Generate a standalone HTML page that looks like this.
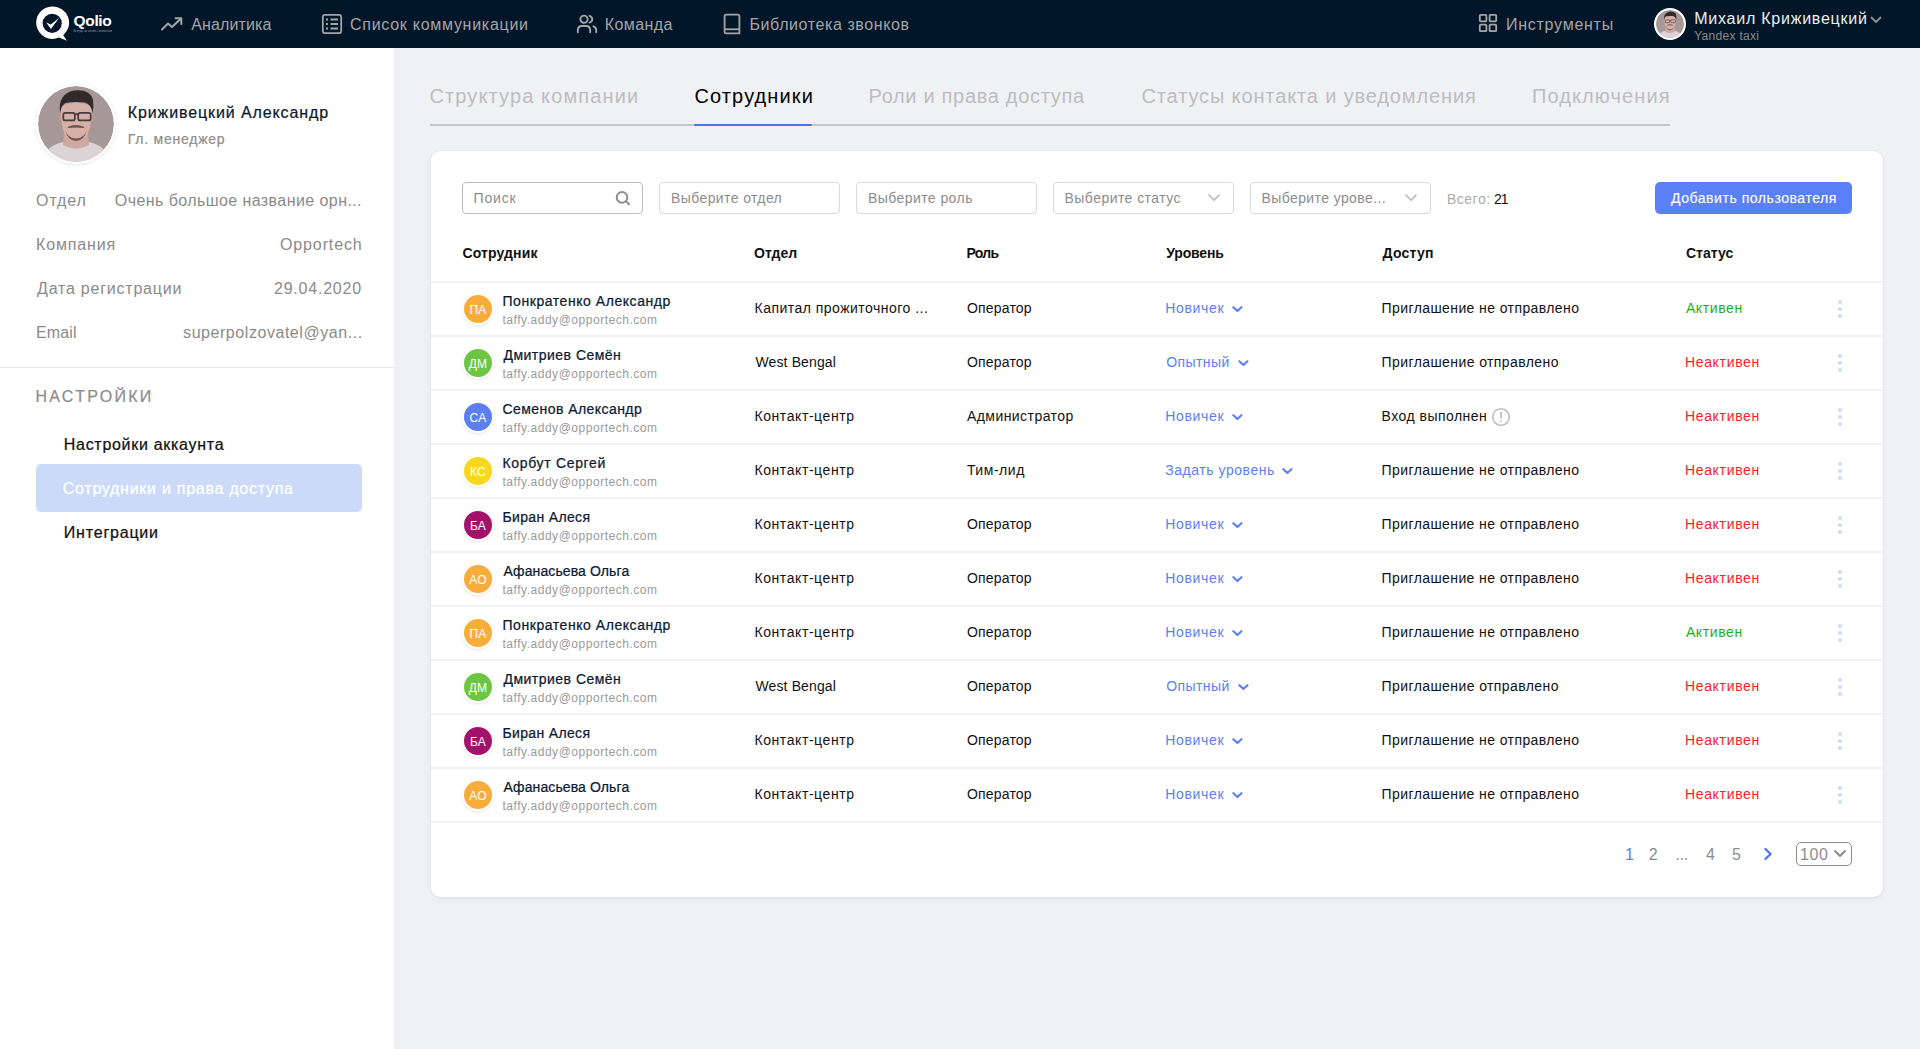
<!DOCTYPE html>
<html lang="ru"><head><meta charset="utf-8"><title>Сотрудники</title>
<style>
*{margin:0;padding:0;box-sizing:border-box}
html,body{width:1920px;height:1049px;overflow:hidden;background:#F0F1F5;font-family:"Liberation Sans",sans-serif}
.t{position:absolute;white-space:nowrap}
.hdr{position:absolute;left:0;top:0;width:1920px;height:48px;background:#011629}
.side{position:absolute;left:0;top:48px;width:394px;height:1001px;background:#FFFFFF}
.sdiv{position:absolute;left:0;top:367px;width:394px;height:1px;background:#E6E6E6}
.hl{position:absolute;left:36px;top:464px;width:326px;height:48px;border-radius:5px;background:#CCDAF9}
.tabline{position:absolute;left:430px;top:124px;width:1240px;height:2px;background:#C6C6C6}
.tabact{position:absolute;left:694px;top:124px;width:118px;height:2px;background:#4C73F0;border-radius:1px}
.card{position:absolute;left:431px;top:151px;width:1452px;height:746px;background:#FFFFFF;border-radius:9px;box-shadow:0 0 1px rgba(0,0,0,0.16),0 2px 5px rgba(0,0,0,0.05)}
.inp{position:absolute;top:182px;height:32px;width:181px;border:1px solid #D9D9D9;border-radius:4px;background:#fff}
.btn{position:absolute;left:1655px;top:182px;width:197px;height:32px;border-radius:5px;background:#5B80F5}
.sep{position:absolute;left:431px;width:1452px;height:2px;background:#F2F2F2}
.av{position:absolute;left:462px;width:32px;height:32px;border-radius:50%;border:2px solid #fff;box-shadow:0 1px 3px rgba(0,0,0,0.10)}
.av span{position:absolute;left:0;top:1px;width:28px;height:28px;line-height:28px;text-align:center;color:#fff;font-size:12px;letter-spacing:0.3px}
.dots{position:absolute;left:1836px;fill:#CCDAFA}
.chev{position:absolute}
.ico{position:absolute}
.psel{position:absolute;left:1796px;top:842px;width:56px;height:24px;border:1px solid #8C8C8C;border-radius:5px}
.pavatar{position:absolute;left:36px;top:84px;width:80px;height:80px;border-radius:50%;background:#fff;box-shadow:0 1px 4px rgba(0,0,0,0.10);padding:2px}
.pavatar svg{display:block;border-radius:50%}
.uav{position:absolute;left:1654px;top:8px;width:32px;height:32px;border-radius:50%;background:#fff;padding:2px}
.uav svg{display:block;border-radius:50%}
</style></head><body>
<div class="hdr"></div>
<!-- logo -->
<svg class="ico" style="left:34px;top:4px" width="82" height="40" viewBox="0 0 82 40">
  <path d="M18.3 2.5 A16.2 16.2 0 1 0 25 33.5 L33 36.8 L29.2 31.2 A16.2 16.2 0 0 0 18.3 2.5Z" fill="#fff"/>
  <circle cx="18.2" cy="19.3" r="9.6" fill="#011629"/>
  <path d="M12.2 18.6 L16.9 25 L25 14 L16.8 20.6 Z" fill="#fff"/>
  <text x="39.6" y="21.9" font-family="Liberation Sans" font-weight="700" font-size="15.5" fill="#fff" letter-spacing="-0.35">Qolio</text>
  <text x="39.6" y="28.4" font-family="Liberation Sans" font-size="3.4" fill="#fff" opacity="0.5" textLength="38.5" lengthAdjust="spacingAndGlyphs">Всегда на связи с клиентом</text>
</svg>
<!-- nav icons -->
<svg class="ico" style="left:160px;top:16px" width="24" height="16" viewBox="0 0 24 16">
  <path d="M2 13.5 L8 7.5 L12 11 L21 2.5" fill="none" stroke="#A5A5A5" stroke-width="2" stroke-linecap="round" stroke-linejoin="round"/>
  <path d="M15.5 2.3 H21.3 V8" fill="none" stroke="#A5A5A5" stroke-width="2" stroke-linecap="round" stroke-linejoin="round"/>
</svg>
<svg class="ico" style="left:321px;top:13px" width="22" height="22" viewBox="0 0 22 22">
  <rect x="1.8" y="1.8" width="18.4" height="18.4" rx="2.2" fill="none" stroke="#A5A5A5" stroke-width="1.8"/>
  <path d="M5 6.5 H7 M9.5 6.5 H17 M5 11 H7 M9.5 11 H17 M5 15.5 H7 M9.5 15.5 H17" stroke="#A5A5A5" stroke-width="1.8"/>
</svg>
<svg class="ico" style="left:576px;top:14px" width="22" height="20" viewBox="0 0 22 20">
  <circle cx="8" cy="5.2" r="3.6" fill="none" stroke="#A5A5A5" stroke-width="1.9"/>
  <path d="M1.8 18.2 V16.5 Q1.8 12 6 12 H10 Q14.2 12 14.2 16.5 V18.2" fill="none" stroke="#A5A5A5" stroke-width="1.9" stroke-linecap="round"/>
  <path d="M13.6 1.8 Q16.3 2.8 16.3 5.2 Q16.3 7.6 13.6 8.6" fill="none" stroke="#A5A5A5" stroke-width="1.9" stroke-linecap="round"/>
  <path d="M17.5 12.3 Q20.2 13.2 20.2 16.5 V18.2" fill="none" stroke="#A5A5A5" stroke-width="1.9" stroke-linecap="round"/>
</svg>
<svg class="ico" style="left:723px;top:13px" width="18" height="22" viewBox="0 0 18 22">
  <path d="M3.2 1.6 H14.8 Q16.4 1.6 16.4 3.2 V20.4 H3.2 Q1.6 20.4 1.6 18.8 V3.2 Q1.6 1.6 3.2 1.6Z" fill="none" stroke="#A5A5A5" stroke-width="1.8"/>
  <path d="M1.8 16.3 H16.2" stroke="#A5A5A5" stroke-width="1.8"/>
</svg>
<svg class="ico" style="left:1478px;top:13px" width="20" height="20" viewBox="0 0 20 20">
  <rect x="1.8" y="1.8" width="6.6" height="6.6" rx="0.8" fill="none" stroke="#A5A5A5" stroke-width="1.8"/>
  <rect x="11.6" y="1.8" width="6.6" height="6.6" rx="0.8" fill="none" stroke="#A5A5A5" stroke-width="1.8"/>
  <rect x="1.8" y="11.6" width="6.6" height="6.6" rx="0.8" fill="none" stroke="#A5A5A5" stroke-width="1.8"/>
  <rect x="11.6" y="11.6" width="6.6" height="6.6" rx="0.8" fill="none" stroke="#A5A5A5" stroke-width="1.8"/>
</svg>
<div class="uav"><svg width="28" height="28" viewBox="0 0 76 76">
<defs><clipPath id="cb"><circle cx="38" cy="38" r="38"/></clipPath><filter id="fb" x="-10%" y="-10%" width="120%" height="120%"><feGaussianBlur stdDeviation="0.7"/></filter></defs>
<g clip-path="url(#cb)">
<rect width="76" height="76" fill="#A69799"/>
<g filter="url(#fb)">
<path d="M4 78 Q6 60 25 56 L51 56 Q70 60 72 78 Z" fill="#DBD3D5"/>
<path d="M26 46 L50 46 L51 59 Q38 66 25 59 Z" fill="#CDA8A0"/>
<ellipse cx="22.8" cy="31" rx="2.6" ry="4.6" fill="#C09890"/>
<ellipse cx="53.6" cy="31" rx="2.6" ry="4.6" fill="#C09890"/>
<path d="M23 20 Q22.5 46 30 52 Q38 57.5 46 52 Q54 46 54 20 Q38 13 23 20 Z" fill="#D4B0A6"/>
<path d="M22 27 Q19.5 8 36 4.5 Q52.5 3 55 14 Q56 21 54.5 27 Q53.5 18.5 47 16.5 Q36 15.5 27.5 17 Q23.5 19 22 27 Z" fill="#332A29"/>
<rect x="25.3" y="26.8" width="11.5" height="7.6" rx="2" fill="none" stroke="#463A3A" stroke-width="1.7"/>
<rect x="40.2" y="26.8" width="12.5" height="7.6" rx="2" fill="none" stroke="#463A3A" stroke-width="1.7"/>
<path d="M36.5 28.2 H40.5" stroke="#463A3A" stroke-width="1.7"/>
<path d="M30 41.5 Q38 37.5 46 41.5 Q38 40.5 30 41.5Z" fill="#6E5852" stroke="#6E5852" stroke-width="1.2"/>
<path d="M27 44 Q30 55 38 55 Q46 55 49 44 Q46 52.5 38 52.5 Q30 52.5 27 44 Z" fill="#6A5550"/>
</g></g></svg></div>
<svg class="ico" style="left:1870px;top:16px" width="12" height="8" viewBox="0 0 12 8">
  <path d="M1.5 1.5 L6 6 L10.5 1.5" fill="none" stroke="#8F8F8F" stroke-width="1.8" stroke-linecap="round" stroke-linejoin="round"/>
</svg>

<div class="side"></div>
<div class="pavatar"><svg width="76" height="76" viewBox="0 0 76 76">
<defs><clipPath id="ca"><circle cx="38" cy="38" r="38"/></clipPath><filter id="fa" x="-10%" y="-10%" width="120%" height="120%"><feGaussianBlur stdDeviation="0.7"/></filter></defs>
<g clip-path="url(#ca)">
<rect width="76" height="76" fill="#A69799"/>
<g filter="url(#fa)">
<path d="M4 78 Q6 60 25 56 L51 56 Q70 60 72 78 Z" fill="#DBD3D5"/>
<path d="M26 46 L50 46 L51 59 Q38 66 25 59 Z" fill="#CDA8A0"/>
<ellipse cx="22.8" cy="31" rx="2.6" ry="4.6" fill="#C09890"/>
<ellipse cx="53.6" cy="31" rx="2.6" ry="4.6" fill="#C09890"/>
<path d="M23 20 Q22.5 46 30 52 Q38 57.5 46 52 Q54 46 54 20 Q38 13 23 20 Z" fill="#D4B0A6"/>
<path d="M22 27 Q19.5 8 36 4.5 Q52.5 3 55 14 Q56 21 54.5 27 Q53.5 18.5 47 16.5 Q36 15.5 27.5 17 Q23.5 19 22 27 Z" fill="#332A29"/>
<rect x="25.3" y="26.8" width="11.5" height="7.6" rx="2" fill="none" stroke="#463A3A" stroke-width="1.7"/>
<rect x="40.2" y="26.8" width="12.5" height="7.6" rx="2" fill="none" stroke="#463A3A" stroke-width="1.7"/>
<path d="M36.5 28.2 H40.5" stroke="#463A3A" stroke-width="1.7"/>
<path d="M30 41.5 Q38 37.5 46 41.5 Q38 40.5 30 41.5Z" fill="#6E5852" stroke="#6E5852" stroke-width="1.2"/>
<path d="M27 44 Q30 55 38 55 Q46 55 49 44 Q46 52.5 38 52.5 Q30 52.5 27 44 Z" fill="#6A5550"/>
</g></g></svg></div>
<div class="sdiv"></div>
<div class="hl"></div>

<div class="tabline"></div>
<div class="tabact"></div>

<div class="card"></div>
<div class="inp" style="left:462px;border-color:#BDBDBD"></div>
<div class="inp" style="left:659px"></div>
<div class="inp" style="left:856px"></div>
<div class="inp" style="left:1053px"></div>
<div class="inp" style="left:1250px"></div>
<svg class="ico" style="left:614px;top:189px" width="18" height="18" viewBox="0 0 18 18">
  <circle cx="8" cy="8.4" r="5.3" fill="none" stroke="#8C8C8C" stroke-width="2"/>
  <path d="M12.1 12.4 L15 15.3" stroke="#8C8C8C" stroke-width="2" stroke-linecap="round"/>
</svg>
<svg class="ico" style="left:1207px;top:193px" width="14" height="10" viewBox="0 0 14 10">
  <path d="M2 2.2 L7 7.2 L12 2.2" fill="none" stroke="#BFBFBF" stroke-width="1.8" stroke-linecap="round" stroke-linejoin="round"/>
</svg>
<svg class="ico" style="left:1404px;top:193px" width="14" height="10" viewBox="0 0 14 10">
  <path d="M2 2.2 L7 7.2 L12 2.2" fill="none" stroke="#BFBFBF" stroke-width="1.8" stroke-linecap="round" stroke-linejoin="round"/>
</svg>
<div class="btn"></div>

<div class="sep" style="top:281px"></div>
<div class="sep" style="top:335px"></div>
<div class="sep" style="top:389px"></div>
<div class="sep" style="top:443px"></div>
<div class="sep" style="top:497px"></div>
<div class="sep" style="top:551px"></div>
<div class="sep" style="top:605px"></div>
<div class="sep" style="top:659px"></div>
<div class="sep" style="top:713px"></div>
<div class="sep" style="top:767px"></div>
<div class="sep" style="top:821px"></div>

<div class="av" style="top:293px;background:#F8AC3B"><span>ПА</span></div>
<div class="av" style="top:347px;background:#6CC644"><span>ДМ</span></div>
<div class="av" style="top:401px;background:#5B7FEF"><span>СА</span></div>
<div class="av" style="top:455px;background:#F8D81C"><span>КС</span></div>
<div class="av" style="top:509px;background:#A3126A"><span>БА</span></div>
<div class="av" style="top:563px;background:#F8AC3B"><span>АО</span></div>
<div class="av" style="top:617px;background:#F8AC3B"><span>ПА</span></div>
<div class="av" style="top:671px;background:#6CC644"><span>ДМ</span></div>
<div class="av" style="top:725px;background:#A3126A"><span>БА</span></div>
<div class="av" style="top:779px;background:#F8AC3B"><span>АО</span></div>

<svg class="dots" style="top:299px" width="8" height="20" viewBox="0 0 8 20"><circle cx="4" cy="3" r="2"/><circle cx="4" cy="10" r="2"/><circle cx="4" cy="17" r="2"/></svg>
<svg class="dots" style="top:353px" width="8" height="20" viewBox="0 0 8 20"><circle cx="4" cy="3" r="2"/><circle cx="4" cy="10" r="2"/><circle cx="4" cy="17" r="2"/></svg>
<svg class="dots" style="top:407px" width="8" height="20" viewBox="0 0 8 20"><circle cx="4" cy="3" r="2"/><circle cx="4" cy="10" r="2"/><circle cx="4" cy="17" r="2"/></svg>
<svg class="dots" style="top:461px" width="8" height="20" viewBox="0 0 8 20"><circle cx="4" cy="3" r="2"/><circle cx="4" cy="10" r="2"/><circle cx="4" cy="17" r="2"/></svg>
<svg class="dots" style="top:515px" width="8" height="20" viewBox="0 0 8 20"><circle cx="4" cy="3" r="2"/><circle cx="4" cy="10" r="2"/><circle cx="4" cy="17" r="2"/></svg>
<svg class="dots" style="top:569px" width="8" height="20" viewBox="0 0 8 20"><circle cx="4" cy="3" r="2"/><circle cx="4" cy="10" r="2"/><circle cx="4" cy="17" r="2"/></svg>
<svg class="dots" style="top:623px" width="8" height="20" viewBox="0 0 8 20"><circle cx="4" cy="3" r="2"/><circle cx="4" cy="10" r="2"/><circle cx="4" cy="17" r="2"/></svg>
<svg class="dots" style="top:677px" width="8" height="20" viewBox="0 0 8 20"><circle cx="4" cy="3" r="2"/><circle cx="4" cy="10" r="2"/><circle cx="4" cy="17" r="2"/></svg>
<svg class="dots" style="top:731px" width="8" height="20" viewBox="0 0 8 20"><circle cx="4" cy="3" r="2"/><circle cx="4" cy="10" r="2"/><circle cx="4" cy="17" r="2"/></svg>
<svg class="dots" style="top:785px" width="8" height="20" viewBox="0 0 8 20"><circle cx="4" cy="3" r="2"/><circle cx="4" cy="10" r="2"/><circle cx="4" cy="17" r="2"/></svg>

<svg class="chev" style="left:1231.5px;top:304.5px" width="11" height="8" viewBox="0 0 11 8"><path d="M1.4 2.2 L5.4 6 L9.4 2.2" fill="none" stroke="#5B7FF2" stroke-width="2.1" stroke-linecap="round" stroke-linejoin="round"/></svg>
<svg class="chev" style="left:1237.5px;top:358.5px" width="11" height="8" viewBox="0 0 11 8"><path d="M1.4 2.2 L5.4 6 L9.4 2.2" fill="none" stroke="#5B7FF2" stroke-width="2.1" stroke-linecap="round" stroke-linejoin="round"/></svg>
<svg class="chev" style="left:1231.5px;top:412.5px" width="11" height="8" viewBox="0 0 11 8"><path d="M1.4 2.2 L5.4 6 L9.4 2.2" fill="none" stroke="#5B7FF2" stroke-width="2.1" stroke-linecap="round" stroke-linejoin="round"/></svg>
<svg class="chev" style="left:1282.2px;top:466.5px" width="11" height="8" viewBox="0 0 11 8"><path d="M1.4 2.2 L5.4 6 L9.4 2.2" fill="none" stroke="#5B7FF2" stroke-width="2.1" stroke-linecap="round" stroke-linejoin="round"/></svg>
<svg class="chev" style="left:1231.5px;top:520.5px" width="11" height="8" viewBox="0 0 11 8"><path d="M1.4 2.2 L5.4 6 L9.4 2.2" fill="none" stroke="#5B7FF2" stroke-width="2.1" stroke-linecap="round" stroke-linejoin="round"/></svg>
<svg class="chev" style="left:1231.5px;top:574.5px" width="11" height="8" viewBox="0 0 11 8"><path d="M1.4 2.2 L5.4 6 L9.4 2.2" fill="none" stroke="#5B7FF2" stroke-width="2.1" stroke-linecap="round" stroke-linejoin="round"/></svg>
<svg class="chev" style="left:1231.5px;top:628.5px" width="11" height="8" viewBox="0 0 11 8"><path d="M1.4 2.2 L5.4 6 L9.4 2.2" fill="none" stroke="#5B7FF2" stroke-width="2.1" stroke-linecap="round" stroke-linejoin="round"/></svg>
<svg class="chev" style="left:1237.5px;top:682.5px" width="11" height="8" viewBox="0 0 11 8"><path d="M1.4 2.2 L5.4 6 L9.4 2.2" fill="none" stroke="#5B7FF2" stroke-width="2.1" stroke-linecap="round" stroke-linejoin="round"/></svg>
<svg class="chev" style="left:1231.5px;top:736.5px" width="11" height="8" viewBox="0 0 11 8"><path d="M1.4 2.2 L5.4 6 L9.4 2.2" fill="none" stroke="#5B7FF2" stroke-width="2.1" stroke-linecap="round" stroke-linejoin="round"/></svg>
<svg class="chev" style="left:1231.5px;top:790.5px" width="11" height="8" viewBox="0 0 11 8"><path d="M1.4 2.2 L5.4 6 L9.4 2.2" fill="none" stroke="#5B7FF2" stroke-width="2.1" stroke-linecap="round" stroke-linejoin="round"/></svg>

<svg class="ico" style="left:1491px;top:407px" width="20" height="20" viewBox="0 0 20 20">
  <circle cx="10" cy="10" r="8.3" fill="none" stroke="#BFBFBF" stroke-width="1.6"/>
  <path d="M10 5.6 V11" stroke="#BFBFBF" stroke-width="1.7" stroke-linecap="round"/>
  <circle cx="10" cy="14.2" r="1" fill="#BFBFBF"/>
</svg>

<svg class="ico" style="left:1762px;top:846px" width="12" height="16" viewBox="0 0 12 16">
  <path d="M3.4 3 L8.6 8 L3.4 13" fill="none" stroke="#4C73F0" stroke-width="2.2" stroke-linecap="round" stroke-linejoin="round"/>
</svg>
<div class="psel"></div>
<svg class="ico" style="left:1833px;top:849px" width="14" height="10" viewBox="0 0 14 10">
  <path d="M2 2 L7 7 L12 2" fill="none" stroke="#8C8C8C" stroke-width="2" stroke-linecap="round" stroke-linejoin="round"/>
</svg>

<span id="nav1" class="t" style="left:191.20px;top:17.06px;font-size:16px;line-height:16px;font-weight:400;color:#A5A5A5;letter-spacing:0.125px">Аналитика</span>
<span id="nav2" class="t" style="left:350.00px;top:17.06px;font-size:16px;line-height:16px;font-weight:400;color:#A5A5A5;letter-spacing:0.722px">Список коммуникации</span>
<span id="nav3" class="t" style="left:604.80px;top:17.06px;font-size:16px;line-height:16px;font-weight:400;color:#A5A5A5;letter-spacing:0.400px">Команда</span>
<span id="nav4" class="t" style="left:749.50px;top:17.06px;font-size:16px;line-height:16px;font-weight:400;color:#A5A5A5;letter-spacing:0.591px">Библиотека звонков</span>
<span id="nav5" class="t" style="left:1506.00px;top:17.06px;font-size:16px;line-height:16px;font-weight:400;color:#A5A5A5;letter-spacing:0.740px">Инструменты</span>
<span id="uname" class="t" style="left:1694.20px;top:11.06px;font-size:16px;line-height:16px;font-weight:400;color:#EDEDED;letter-spacing:0.765px">Михаил Криживецкий</span>
<span id="ucomp" class="t" style="left:1694.20px;top:29.84px;font-size:12px;line-height:12px;font-weight:400;color:#8A8A8A;letter-spacing:0.300px">Yandex taxi</span>
<span id="pname" class="t" style="left:127.80px;top:104.86px;font-size:16px;line-height:16px;font-weight:400;color:#0A1931;letter-spacing:0.890px;-webkit-text-stroke:0.24px #0A1931">Криживецкий Александр</span>
<span id="prole" class="t" style="left:127.80px;top:131.85px;font-size:14px;line-height:14px;font-weight:400;color:#8F8F8F;letter-spacing:0.761px;-webkit-text-stroke:0.24px #8F8F8F">Гл. менеджер</span>
<span id="l1" class="t" style="left:36.10px;top:193.26px;font-size:16px;line-height:16px;font-weight:400;color:#8A8A8A;letter-spacing:0.850px">Отдел</span>
<span id="v1" class="t" style="left:114.80px;top:193.26px;font-size:16px;line-height:16px;font-weight:400;color:#8A8A8A;letter-spacing:0.422px">Очень большое название орн...</span>
<span id="l2" class="t" style="left:36.10px;top:237.16px;font-size:16px;line-height:16px;font-weight:400;color:#8A8A8A;letter-spacing:0.826px">Компания</span>
<span id="v2" class="t" style="left:280.00px;top:237.16px;font-size:16px;line-height:16px;font-weight:400;color:#8A8A8A;letter-spacing:0.875px">Opportech</span>
<span id="l3" class="t" style="left:37.10px;top:280.96px;font-size:16px;line-height:16px;font-weight:400;color:#8A8A8A;letter-spacing:0.774px">Дата регистрации</span>
<span id="v3" class="t" style="left:274.00px;top:280.96px;font-size:16px;line-height:16px;font-weight:400;color:#8A8A8A;letter-spacing:0.778px">29.04.2020</span>
<span id="l4" class="t" style="left:36.10px;top:324.96px;font-size:16px;line-height:16px;font-weight:400;color:#8A8A8A;letter-spacing:0.100px">Email</span>
<span id="v4" class="t" style="left:183.10px;top:324.96px;font-size:16px;line-height:16px;font-weight:400;color:#8A8A8A;letter-spacing:0.551px">superpolzovatel@yan...</span>
<span id="set" class="t" style="left:35.50px;top:389.46px;font-size:16px;line-height:16px;font-weight:400;color:#8C8C8C;letter-spacing:2.249px;-webkit-text-stroke:0.24px #8C8C8C">НАСТРОЙКИ</span>
<span id="s1" class="t" style="left:63.80px;top:437.36px;font-size:16px;line-height:16px;font-weight:400;color:#111111;letter-spacing:0.706px;-webkit-text-stroke:0.24px #111111">Настройки аккаунта</span>
<span id="s2" class="t" style="left:62.80px;top:480.96px;font-size:16px;line-height:16px;font-weight:400;color:#FFFFFF;letter-spacing:0.728px;-webkit-text-stroke:0.24px #FFFFFF">Сотрудники и права доступа</span>
<span id="s3" class="t" style="left:63.80px;top:525.26px;font-size:16px;line-height:16px;font-weight:400;color:#111111;letter-spacing:0.799px;-webkit-text-stroke:0.24px #111111">Интеграции</span>
<span id="t1" class="t" style="left:429.50px;top:86.37px;font-size:20px;line-height:20px;font-weight:400;color:#BDBDBD;letter-spacing:1.117px">Структура компании</span>
<span id="t2" class="t" style="left:694.50px;top:86.37px;font-size:20px;line-height:20px;font-weight:400;color:#000000;letter-spacing:1.111px">Сотрудники</span>
<span id="t3" class="t" style="left:868.50px;top:86.37px;font-size:20px;line-height:20px;font-weight:400;color:#BDBDBD;letter-spacing:0.684px">Роли и права доступа</span>
<span id="t4" class="t" style="left:1141.50px;top:86.37px;font-size:20px;line-height:20px;font-weight:400;color:#BDBDBD;letter-spacing:0.867px">Статусы контакта и уведомления</span>
<span id="t5" class="t" style="left:1532.00px;top:86.37px;font-size:20px;line-height:20px;font-weight:400;color:#BDBDBD;letter-spacing:1.100px">Подключения</span>
<span id="f1" class="t" style="left:473.60px;top:190.65px;font-size:14px;line-height:14px;font-weight:400;color:#8C8C8C;letter-spacing:0.800px">Поиск</span>
<span id="f2" class="t" style="left:671.10px;top:191.15px;font-size:14px;line-height:14px;font-weight:400;color:#8C8C8C;letter-spacing:0.385px">Выберите отдел</span>
<span id="f3" class="t" style="left:867.90px;top:191.15px;font-size:14px;line-height:14px;font-weight:400;color:#8C8C8C;letter-spacing:0.436px">Выберите роль</span>
<span id="f4" class="t" style="left:1064.60px;top:191.15px;font-size:14px;line-height:14px;font-weight:400;color:#8C8C8C;letter-spacing:0.440px">Выберите статус</span>
<span id="f5" class="t" style="left:1261.50px;top:191.15px;font-size:14px;line-height:14px;font-weight:400;color:#8C8C8C;letter-spacing:0.400px">Выберите урове...</span>
<span id="tot1" class="t" style="left:1446.90px;top:192.05px;font-size:14px;line-height:14px;font-weight:400;color:#ABABAB;letter-spacing:0.520px">Всего:</span>
<span id="tot2" class="t" style="left:1494.00px;top:192.05px;font-size:14px;line-height:14px;font-weight:400;color:#111111;letter-spacing:-1.000px">21</span>
<span id="btn" class="t" style="left:1671.00px;top:191.45px;font-size:14px;line-height:14px;font-weight:400;color:#FFFFFF;letter-spacing:0.547px;-webkit-text-stroke:0.12px #FFFFFF">Добавить пользователя</span>
<span id="h1" class="t" style="left:462.50px;top:246.05px;font-size:14px;line-height:14px;font-weight:700;color:#111111;letter-spacing:0.125px">Сотрудник</span>
<span id="h2" class="t" style="left:754.00px;top:246.05px;font-size:14px;line-height:14px;font-weight:700;color:#111111;letter-spacing:0.000px">Отдел</span>
<span id="h3" class="t" style="left:966.50px;top:246.05px;font-size:14px;line-height:14px;font-weight:700;color:#111111;letter-spacing:-0.733px">Роль</span>
<span id="h4" class="t" style="left:1166.25px;top:246.05px;font-size:14px;line-height:14px;font-weight:700;color:#111111;letter-spacing:-0.169px">Уровень</span>
<span id="h5" class="t" style="left:1382.60px;top:246.05px;font-size:14px;line-height:14px;font-weight:700;color:#111111;letter-spacing:0.240px">Доступ</span>
<span id="h6" class="t" style="left:1685.90px;top:246.05px;font-size:14px;line-height:14px;font-weight:700;color:#111111;letter-spacing:0.040px">Статус</span>
<span id="r0name" class="t" style="left:502.50px;top:294.25px;font-size:14px;line-height:14px;font-weight:400;color:#0B1A33;letter-spacing:0.550px;-webkit-text-stroke:0.24px #0B1A33">Понкратенко Александр</span>
<span id="r0mail" class="t" style="left:502.50px;top:313.94px;font-size:12px;line-height:12px;font-weight:400;color:#9A9A9A;letter-spacing:0.522px">taffy.addy@opportech.com</span>
<span id="r0dept" class="t" style="left:754.50px;top:301.15px;font-size:14px;line-height:14px;font-weight:400;color:#111111;letter-spacing:0.479px">Капитал прожиточного ...</span>
<span id="r0role" class="t" style="left:966.90px;top:301.15px;font-size:14px;line-height:14px;font-weight:400;color:#111111;letter-spacing:0.199px">Оператор</span>
<span id="r0lvl" class="t" style="left:1165.25px;top:301.15px;font-size:14px;line-height:14px;font-weight:400;color:#5B7FF2;letter-spacing:0.664px">Новичек</span>
<span id="r0acc" class="t" style="left:1381.60px;top:301.15px;font-size:14px;line-height:14px;font-weight:400;color:#111111;letter-spacing:0.402px">Приглашение не отправлено</span>
<span id="r0st" class="t" style="left:1685.90px;top:301.15px;font-size:14px;line-height:14px;font-weight:400;color:#1FAE1F;letter-spacing:0.599px">Активен</span>
<span id="r1name" class="t" style="left:503.50px;top:348.25px;font-size:14px;line-height:14px;font-weight:400;color:#0B1A33;letter-spacing:0.480px;-webkit-text-stroke:0.24px #0B1A33">Дмитриев Семён</span>
<span id="r1mail" class="t" style="left:502.50px;top:367.94px;font-size:12px;line-height:12px;font-weight:400;color:#9A9A9A;letter-spacing:0.522px">taffy.addy@opportech.com</span>
<span id="r1dept" class="t" style="left:755.50px;top:355.15px;font-size:14px;line-height:14px;font-weight:400;color:#111111;letter-spacing:0.120px">West Bengal</span>
<span id="r1role" class="t" style="left:966.90px;top:355.15px;font-size:14px;line-height:14px;font-weight:400;color:#111111;letter-spacing:0.199px">Оператор</span>
<span id="r1lvl" class="t" style="left:1166.25px;top:355.15px;font-size:14px;line-height:14px;font-weight:400;color:#5B7FF2;letter-spacing:0.401px">Опытный</span>
<span id="r1acc" class="t" style="left:1381.60px;top:355.15px;font-size:14px;line-height:14px;font-weight:400;color:#111111;letter-spacing:0.406px">Приглашение отправлено</span>
<span id="r1st" class="t" style="left:1684.90px;top:355.15px;font-size:14px;line-height:14px;font-weight:400;color:#F5222D;letter-spacing:0.675px">Неактивен</span>
<span id="r2name" class="t" style="left:502.50px;top:402.25px;font-size:14px;line-height:14px;font-weight:400;color:#0B1A33;letter-spacing:0.438px;-webkit-text-stroke:0.24px #0B1A33">Семенов Александр</span>
<span id="r2mail" class="t" style="left:502.50px;top:421.94px;font-size:12px;line-height:12px;font-weight:400;color:#9A9A9A;letter-spacing:0.522px">taffy.addy@opportech.com</span>
<span id="r2dept" class="t" style="left:754.50px;top:409.15px;font-size:14px;line-height:14px;font-weight:400;color:#111111;letter-spacing:0.567px">Контакт-центр</span>
<span id="r2role" class="t" style="left:966.90px;top:409.15px;font-size:14px;line-height:14px;font-weight:400;color:#111111;letter-spacing:0.452px">Администратор</span>
<span id="r2lvl" class="t" style="left:1165.25px;top:409.15px;font-size:14px;line-height:14px;font-weight:400;color:#5B7FF2;letter-spacing:0.664px">Новичек</span>
<span id="r2acc" class="t" style="left:1381.60px;top:409.15px;font-size:14px;line-height:14px;font-weight:400;color:#111111;letter-spacing:0.464px">Вход выполнен</span>
<span id="r2st" class="t" style="left:1684.90px;top:409.15px;font-size:14px;line-height:14px;font-weight:400;color:#F5222D;letter-spacing:0.675px">Неактивен</span>
<span id="r3name" class="t" style="left:502.50px;top:456.25px;font-size:14px;line-height:14px;font-weight:400;color:#0B1A33;letter-spacing:0.666px;-webkit-text-stroke:0.24px #0B1A33">Корбут Сергей</span>
<span id="r3mail" class="t" style="left:502.50px;top:475.94px;font-size:12px;line-height:12px;font-weight:400;color:#9A9A9A;letter-spacing:0.522px">taffy.addy@opportech.com</span>
<span id="r3dept" class="t" style="left:754.50px;top:463.15px;font-size:14px;line-height:14px;font-weight:400;color:#111111;letter-spacing:0.567px">Контакт-центр</span>
<span id="r3role" class="t" style="left:966.90px;top:463.15px;font-size:14px;line-height:14px;font-weight:400;color:#111111;letter-spacing:0.536px">Тим-лид</span>
<span id="r3lvl" class="t" style="left:1165.25px;top:463.15px;font-size:14px;line-height:14px;font-weight:400;color:#5B7FF2;letter-spacing:0.541px">Задать уровень</span>
<span id="r3acc" class="t" style="left:1381.60px;top:463.15px;font-size:14px;line-height:14px;font-weight:400;color:#111111;letter-spacing:0.402px">Приглашение не отправлено</span>
<span id="r3st" class="t" style="left:1684.90px;top:463.15px;font-size:14px;line-height:14px;font-weight:400;color:#F5222D;letter-spacing:0.675px">Неактивен</span>
<span id="r4name" class="t" style="left:502.50px;top:510.25px;font-size:14px;line-height:14px;font-weight:400;color:#0B1A33;letter-spacing:0.340px;-webkit-text-stroke:0.24px #0B1A33">Биран Алеся</span>
<span id="r4mail" class="t" style="left:502.50px;top:529.94px;font-size:12px;line-height:12px;font-weight:400;color:#9A9A9A;letter-spacing:0.522px">taffy.addy@opportech.com</span>
<span id="r4dept" class="t" style="left:754.50px;top:517.15px;font-size:14px;line-height:14px;font-weight:400;color:#111111;letter-spacing:0.567px">Контакт-центр</span>
<span id="r4role" class="t" style="left:966.90px;top:517.15px;font-size:14px;line-height:14px;font-weight:400;color:#111111;letter-spacing:0.199px">Оператор</span>
<span id="r4lvl" class="t" style="left:1165.25px;top:517.15px;font-size:14px;line-height:14px;font-weight:400;color:#5B7FF2;letter-spacing:0.664px">Новичек</span>
<span id="r4acc" class="t" style="left:1381.60px;top:517.15px;font-size:14px;line-height:14px;font-weight:400;color:#111111;letter-spacing:0.402px">Приглашение не отправлено</span>
<span id="r4st" class="t" style="left:1684.90px;top:517.15px;font-size:14px;line-height:14px;font-weight:400;color:#F5222D;letter-spacing:0.675px">Неактивен</span>
<span id="r5name" class="t" style="left:503.50px;top:564.25px;font-size:14px;line-height:14px;font-weight:400;color:#0B1A33;letter-spacing:0.105px;-webkit-text-stroke:0.24px #0B1A33">Афанасьева Ольга</span>
<span id="r5mail" class="t" style="left:502.50px;top:583.94px;font-size:12px;line-height:12px;font-weight:400;color:#9A9A9A;letter-spacing:0.522px">taffy.addy@opportech.com</span>
<span id="r5dept" class="t" style="left:754.50px;top:571.15px;font-size:14px;line-height:14px;font-weight:400;color:#111111;letter-spacing:0.567px">Контакт-центр</span>
<span id="r5role" class="t" style="left:966.90px;top:571.15px;font-size:14px;line-height:14px;font-weight:400;color:#111111;letter-spacing:0.199px">Оператор</span>
<span id="r5lvl" class="t" style="left:1165.25px;top:571.15px;font-size:14px;line-height:14px;font-weight:400;color:#5B7FF2;letter-spacing:0.664px">Новичек</span>
<span id="r5acc" class="t" style="left:1381.60px;top:571.15px;font-size:14px;line-height:14px;font-weight:400;color:#111111;letter-spacing:0.402px">Приглашение не отправлено</span>
<span id="r5st" class="t" style="left:1684.90px;top:571.15px;font-size:14px;line-height:14px;font-weight:400;color:#F5222D;letter-spacing:0.675px">Неактивен</span>
<span id="r6name" class="t" style="left:502.50px;top:618.25px;font-size:14px;line-height:14px;font-weight:400;color:#0B1A33;letter-spacing:0.550px;-webkit-text-stroke:0.24px #0B1A33">Понкратенко Александр</span>
<span id="r6mail" class="t" style="left:502.50px;top:637.94px;font-size:12px;line-height:12px;font-weight:400;color:#9A9A9A;letter-spacing:0.522px">taffy.addy@opportech.com</span>
<span id="r6dept" class="t" style="left:754.50px;top:625.15px;font-size:14px;line-height:14px;font-weight:400;color:#111111;letter-spacing:0.567px">Контакт-центр</span>
<span id="r6role" class="t" style="left:966.90px;top:625.15px;font-size:14px;line-height:14px;font-weight:400;color:#111111;letter-spacing:0.199px">Оператор</span>
<span id="r6lvl" class="t" style="left:1165.25px;top:625.15px;font-size:14px;line-height:14px;font-weight:400;color:#5B7FF2;letter-spacing:0.664px">Новичек</span>
<span id="r6acc" class="t" style="left:1381.60px;top:625.15px;font-size:14px;line-height:14px;font-weight:400;color:#111111;letter-spacing:0.402px">Приглашение не отправлено</span>
<span id="r6st" class="t" style="left:1685.90px;top:625.15px;font-size:14px;line-height:14px;font-weight:400;color:#1FAE1F;letter-spacing:0.599px">Активен</span>
<span id="r7name" class="t" style="left:503.50px;top:672.25px;font-size:14px;line-height:14px;font-weight:400;color:#0B1A33;letter-spacing:0.480px;-webkit-text-stroke:0.24px #0B1A33">Дмитриев Семён</span>
<span id="r7mail" class="t" style="left:502.50px;top:691.94px;font-size:12px;line-height:12px;font-weight:400;color:#9A9A9A;letter-spacing:0.522px">taffy.addy@opportech.com</span>
<span id="r7dept" class="t" style="left:755.50px;top:679.15px;font-size:14px;line-height:14px;font-weight:400;color:#111111;letter-spacing:0.120px">West Bengal</span>
<span id="r7role" class="t" style="left:966.90px;top:679.15px;font-size:14px;line-height:14px;font-weight:400;color:#111111;letter-spacing:0.199px">Оператор</span>
<span id="r7lvl" class="t" style="left:1166.25px;top:679.15px;font-size:14px;line-height:14px;font-weight:400;color:#5B7FF2;letter-spacing:0.401px">Опытный</span>
<span id="r7acc" class="t" style="left:1381.60px;top:679.15px;font-size:14px;line-height:14px;font-weight:400;color:#111111;letter-spacing:0.406px">Приглашение отправлено</span>
<span id="r7st" class="t" style="left:1684.90px;top:679.15px;font-size:14px;line-height:14px;font-weight:400;color:#F5222D;letter-spacing:0.675px">Неактивен</span>
<span id="r8name" class="t" style="left:502.50px;top:726.25px;font-size:14px;line-height:14px;font-weight:400;color:#0B1A33;letter-spacing:0.340px;-webkit-text-stroke:0.24px #0B1A33">Биран Алеся</span>
<span id="r8mail" class="t" style="left:502.50px;top:745.94px;font-size:12px;line-height:12px;font-weight:400;color:#9A9A9A;letter-spacing:0.522px">taffy.addy@opportech.com</span>
<span id="r8dept" class="t" style="left:754.50px;top:733.15px;font-size:14px;line-height:14px;font-weight:400;color:#111111;letter-spacing:0.567px">Контакт-центр</span>
<span id="r8role" class="t" style="left:966.90px;top:733.15px;font-size:14px;line-height:14px;font-weight:400;color:#111111;letter-spacing:0.199px">Оператор</span>
<span id="r8lvl" class="t" style="left:1165.25px;top:733.15px;font-size:14px;line-height:14px;font-weight:400;color:#5B7FF2;letter-spacing:0.664px">Новичек</span>
<span id="r8acc" class="t" style="left:1381.60px;top:733.15px;font-size:14px;line-height:14px;font-weight:400;color:#111111;letter-spacing:0.402px">Приглашение не отправлено</span>
<span id="r8st" class="t" style="left:1684.90px;top:733.15px;font-size:14px;line-height:14px;font-weight:400;color:#F5222D;letter-spacing:0.675px">Неактивен</span>
<span id="r9name" class="t" style="left:503.50px;top:780.25px;font-size:14px;line-height:14px;font-weight:400;color:#0B1A33;letter-spacing:0.105px;-webkit-text-stroke:0.24px #0B1A33">Афанасьева Ольга</span>
<span id="r9mail" class="t" style="left:502.50px;top:799.94px;font-size:12px;line-height:12px;font-weight:400;color:#9A9A9A;letter-spacing:0.522px">taffy.addy@opportech.com</span>
<span id="r9dept" class="t" style="left:754.50px;top:787.15px;font-size:14px;line-height:14px;font-weight:400;color:#111111;letter-spacing:0.567px">Контакт-центр</span>
<span id="r9role" class="t" style="left:966.90px;top:787.15px;font-size:14px;line-height:14px;font-weight:400;color:#111111;letter-spacing:0.199px">Оператор</span>
<span id="r9lvl" class="t" style="left:1165.25px;top:787.15px;font-size:14px;line-height:14px;font-weight:400;color:#5B7FF2;letter-spacing:0.664px">Новичек</span>
<span id="r9acc" class="t" style="left:1381.60px;top:787.15px;font-size:14px;line-height:14px;font-weight:400;color:#111111;letter-spacing:0.402px">Приглашение не отправлено</span>
<span id="r9st" class="t" style="left:1684.90px;top:787.15px;font-size:14px;line-height:14px;font-weight:400;color:#F5222D;letter-spacing:0.675px">Неактивен</span>
<span id="p1" class="t" style="left:1625.00px;top:846.96px;font-size:16px;line-height:16px;font-weight:400;color:#5B7FF2;letter-spacing:-3.000px">1</span>
<span id="p2" class="t" style="left:1648.80px;top:846.96px;font-size:16px;line-height:16px;font-weight:400;color:#8C8C8C;letter-spacing:2.800px">2</span>
<span id="p3" class="t" style="left:1675.40px;top:846.96px;font-size:16px;line-height:16px;font-weight:400;color:#8C8C8C;letter-spacing:-0.300px">...</span>
<span id="p4" class="t" style="left:1706.10px;top:846.96px;font-size:16px;line-height:16px;font-weight:400;color:#8C8C8C;letter-spacing:-1.400px">4</span>
<span id="p5" class="t" style="left:1732.10px;top:846.96px;font-size:16px;line-height:16px;font-weight:400;color:#8C8C8C;letter-spacing:3.000px">5</span>
<span id="psel" class="t" style="left:1800.10px;top:846.96px;font-size:16px;line-height:16px;font-weight:400;color:#8C8C8C;letter-spacing:0.600px">100</span>
</body></html>
